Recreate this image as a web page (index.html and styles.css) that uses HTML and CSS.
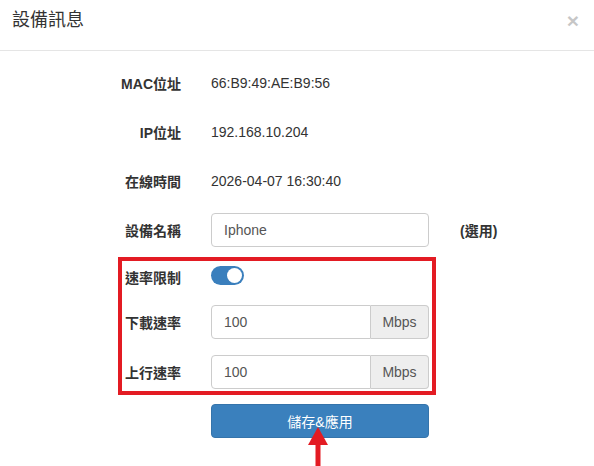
FILE: index.html
```html
<!DOCTYPE html>
<html lang="zh-Hant">
<head>
  <meta charset="UTF-8">
  <title>設備訊息</title>
  <link rel="stylesheet" href="styles.css">
</head>
<body>
  <div class="modal">
    <div class="modal-header">
      <h4 class="modal-title">設備訊息</h4>
      <span class="close">&times;</span>
    </div>

    <div class="modal-body">
      <div class="row">
        <label class="label">MAC位址</label>
        <div class="value">66:B9:49:AE:B9:56</div>
      </div>
      <div class="row">
        <label class="label">IP位址</label>
        <div class="value">192.168.10.204</div>
      </div>
      <div class="row">
        <label class="label">在線時間</label>
        <div class="value">2026-04-07 16:30:40</div>
      </div>
      <div class="row row-name">
        <label class="label">設備名稱</label>
        <input type="text" class="form-control" value="Iphone">
        <span class="hint">(選用)</span>
      </div>

      <div class="highlight">
        <div class="row row-toggle">
          <label class="label">速率限制</label>
          <span class="switch"><span class="knob"></span></span>
        </div>
        <div class="row row-down">
          <label class="label">下載速率</label>
          <div class="input-group">
            <input type="text" class="form-control" value="100">
            <span class="addon">Mbps</span>
          </div>
        </div>
        <div class="row row-last">
          <label class="label">上行速率</label>
          <div class="input-group">
            <input type="text" class="form-control" value="100">
            <span class="addon">Mbps</span>
          </div>
        </div>
      </div>

      <div class="actions">
        <button class="btn-primary">儲存&amp;應用</button>
      </div>
    </div>

    <svg class="arrow" width="24" height="40" viewBox="0 0 24 40">
      <polygon points="12,0 2,18 22,18" fill="#e31b23"/>
      <rect x="9.5" y="17" width="5" height="23" fill="#e31b23"/>
    </svg>
  </div>
</body>
</html>
```

FILE: styles.css
```css
* {
  box-sizing: border-box;
}
body {
  margin: 0;
  background: #fff;
  font-family: "Liberation Sans", Arial, "Noto Sans CJK TC", sans-serif;
  font-size: 14px;
  color: #333;
}
.modal {
  position: relative;
  width: 594px;
  height: 466px;
  overflow: hidden;
}
.modal-header {
  height: 51px;
  border-bottom: 1px solid #e5e5e5;
  display: flex;
  justify-content: space-between;
  align-items: flex-start;
  padding: 7px 15px 0 12px;
}
.modal-title {
  margin: 0;
  font-size: 18px;
  font-weight: normal;
  line-height: 26px;
  color: #333;
}
.close {
  font-size: 21px;
  font-weight: bold;
  line-height: 21px;
  color: #000;
  opacity: 0.22;
  margin-top: 3px;
}
.modal-body {
  padding-top: 15px;
}
.row {
  display: flex;
  align-items: center;
  height: 34px;
  margin-bottom: 15px;
}
.label {
  width: 211px;
  padding-right: 30px;
  text-align: right;
  font-weight: bold;
  color: #333;
}
.value {
  color: #333;
}
.form-control {
  width: 218px;
  height: 34px;
  padding: 6px 12px;
  font-family: inherit;
  font-size: 14px;
  color: #555;
  border: 1px solid #ccc;
  border-radius: 4px;
  outline: none;
  background: #fff;
}
.row-name {
  margin-bottom: 10px;
}
.hint {
  margin-left: 31px;
  font-weight: bold;
}
.highlight {
  margin-left: 118px;
  width: 318px;
  border: 4px solid #e31b23;
  padding-bottom: 2px;
}
.highlight .label {
  width: 89px;
}
.row-toggle {
  height: 28px;
  margin-bottom: 16px;
}
.row-toggle .label {
  padding-top: 4px;
}
.row-down {
  margin-bottom: 16px;
}
.row-last {
  margin-bottom: 0;
}
.switch {
  position: relative;
  display: inline-block;
  width: 33px;
  height: 19px;
  border-radius: 10px;
  background: #3a7fbd;
}
.knob {
  position: absolute;
  top: 2px;
  right: 2px;
  width: 15px;
  height: 15px;
  border-radius: 50%;
  background: #fff;
}
.input-group {
  display: flex;
  width: 218px;
}
.input-group .form-control {
  width: 160px;
  border-radius: 4px 0 0 4px;
}
.addon {
  width: 58px;
  height: 34px;
  line-height: 32px;
  text-align: center;
  color: #555;
  background: #eee;
  border: 1px solid #ccc;
  border-left: none;
  border-radius: 0 4px 4px 0;
}
.actions {
  margin-top: 9px;
  padding-left: 211px;
}
.btn-primary {
  width: 218px;
  height: 34px;
  font-family: inherit;
  font-size: 14px;
  color: #fff;
  background: #3a80bd;
  border: 1px solid #3574ab;
  border-radius: 4px;
}
.arrow {
  position: absolute;
  left: 306px;
  top: 427px;
}
```
